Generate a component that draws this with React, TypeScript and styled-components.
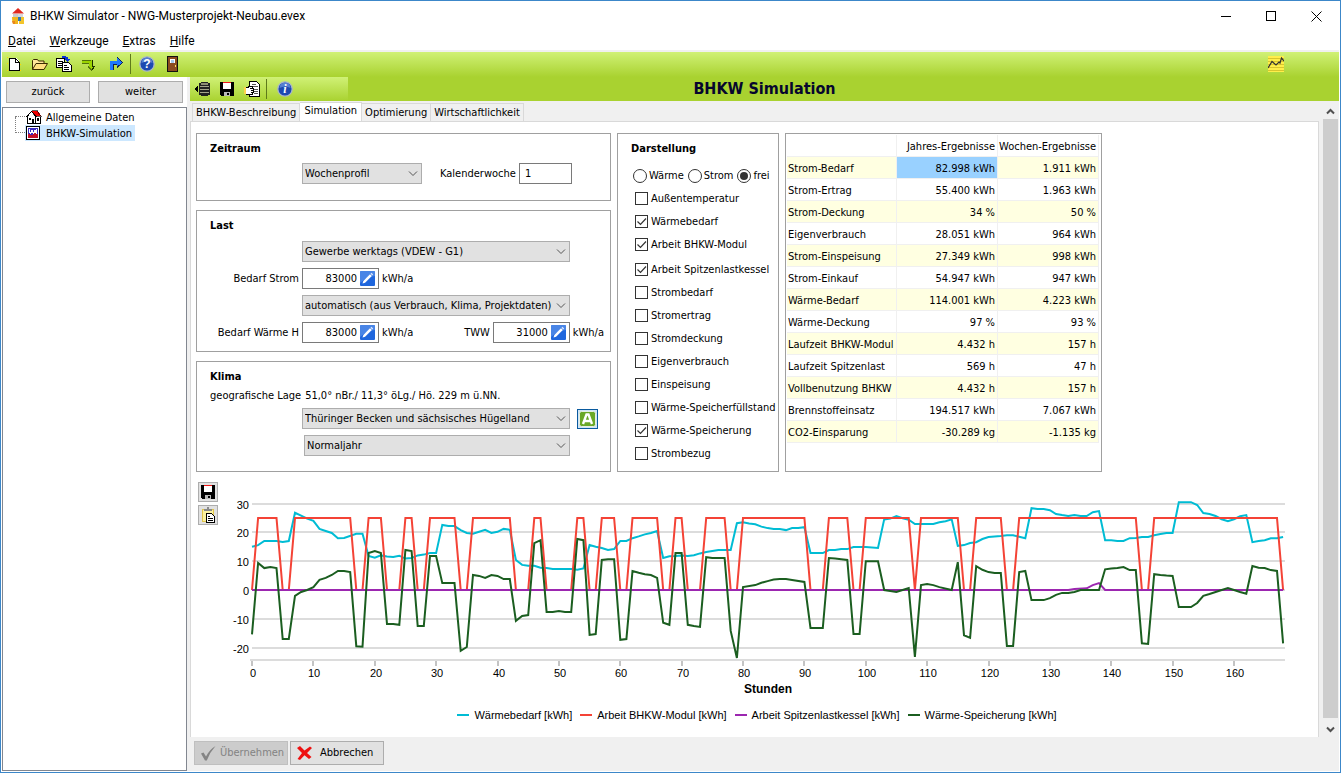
import React, { useState } from "react";
import styled, { createGlobalStyle, css } from "styled-components";

const ui = `"DejaVu Sans Condensed", "DejaVu Sans", "Liberation Sans", sans-serif`;
const shell = `Roboto, "Open Sans", sans-serif`;
const plot = `"Liberation Sans", Arial, sans-serif`;

const Global = createGlobalStyle`
  *, *::before, *::after { box-sizing: border-box; }
  body { margin: 0; background: #fff; color: #000; font: 11px/16px ${ui}; }
  button, input, select { font: inherit; color: inherit; margin: 0; padding: 0; border-radius: 0; }
  svg { display: block; flex: none; }
`;

/* ---------- window shell ---------- */

const Window = styled.div`
  min-height: 100vh;
  display: flex;
  flex-direction: column;
  border: 1px solid #3c87c9;
  padding: 0 1px 1px;
  background: #fff;
`;
const TitleBar = styled.header`
  display: flex;
  align-items: center;
  height: 30px;
  padding-left: 7px;
  font: 12px/16px ${shell};
`;
const TitleText = styled.span`
  margin-left: 5px;
  flex: 1;
`;
const CaptionButton = styled.button`
  width: 45px;
  height: 28px;
  border: 0;
  background: none;
  display: grid;
  place-items: center;
`;
const MenuBar = styled.nav`
  display: flex;
  gap: 14px;
  height: 21px;
  padding: 1px 6px 0;
  border-bottom: 2px solid #f0f0f0;
  font: 12px/18px ${shell};
`;
const MenuItem = styled.button`
  border: 0;
  background: none;
  &::first-letter { text-decoration: underline; }
`;
const ToolBar = styled.div<{ $width?: number }>`
  display: flex;
  align-items: center;
  gap: 1px;
  height: ${(p) => (p.$width ? 24 : 25)}px;
  width: ${(p) => (p.$width ? `${p.$width}px` : "auto")};
  flex: none;
  padding-bottom: ${(p) => (p.$width ? 0 : 2)}px;
  background: linear-gradient(#d0f176, #a9d230);
`;
const ToolButton = styled.button<{ $gap?: number }>`
  width: 24px;
  height: 22px;
  margin-left: ${(p) => p.$gap ?? 0}px;
  border: 0;
  background: none;
  display: grid;
  place-items: center;
`;
const ToolDivider = styled.span`
  width: 1px;
  height: 20px;
  margin: 0 3px 0 1px;
  background: #5f7a1a;
`;
const Spacer = styled.span`
  flex: 1;
`;
const Body = styled.div`
  flex: 1;
  display: flex;
`;

/* ---------- navigation column ---------- */

const Side = styled.aside`
  flex: none;
  width: 188px;
  display: flex;
  flex-direction: column;
  background: #fff;
  border-right: 3px solid #f0f0f0;
  padding: 4px 0 0;
`;
const StepRow = styled.div`
  display: grid;
  grid-template-columns: 84px 85px;
  gap: 8px;
  padding: 0 4px 5px;
`;
const StepButton = styled.button`
  height: 22px;
  margin-bottom: -1px;
  border: 1px solid #adadad;
  background: #e1e1e1;
`;
const Tree = styled.ul`
  flex: 1;
  list-style: none;
  margin: 0;
  padding: 1px 0 0 22px;
  border: 1px solid #828790;
`;
const TreeItem = styled.li<{ $selected?: boolean }>`
  position: relative;
  width: fit-content;
  height: 16px;
  display: flex;
  align-items: center;
  padding: 0 3px 0 1px;
  background: ${(p) => (p.$selected ? "#cde8ff" : "transparent")};
  gap: 4px;
  &::before {
    content: "";
    position: absolute;
    left: -10px;
    width: 10px;
    bottom: 8px;
    height: ${(p) => (p.$selected ? 16 : 1)}px;
    border-bottom: 1px dotted #808080;
    border-left: ${(p) => (p.$selected ? "1px dotted #808080" : "0")};
  }
`;
const TreeText = styled.span`
  padding-top: 2px;
  line-height: 16px;
`;

/* ---------- main column ---------- */

const Main = styled.main`
  flex: 1;
  min-width: 0;
  display: flex;
  flex-direction: column;
  background: #f0f0f0;
`;
const PageHead = styled.div`
  display: flex;
  align-items: center;
  background: #a9d230;
  height: 24px;
`;
const PageTitle = styled.h1`
  flex: 1;
  margin: 0 0 0 -158px;
  color: #06062e;
  font: bold 16px/24px ${ui};
  text-align: center;
`;
const Scroller = styled.div`
  flex: 1;
  display: flex;
  min-height: 0;
`;
const PageColumn = styled.div`
  flex: 1;
  min-width: 0;
  display: flex;
  flex-direction: column;
`;
const Tabs = styled.div`
  display: flex;
  align-items: flex-end;
  height: 20px;
  padding-left: 2px;
`;
const Tab = styled.button<{ $active?: boolean }>`
  height: 18px;
  padding: 1px 3px 0;
  border: 1px solid #d9d9d9;
  border-bottom: 0;
  border-left-width: 0;
  background: #f0f0f0;
  white-space: nowrap;
  line-height: 16px;
  &:first-child { border-left-width: 1px; }
  ${(p) =>
    p.$active &&
    css`
      height: 20px;
      margin-bottom: -1px;
      padding: 0 4px 3px;
      background: #fff;
    `}
`;
const Page = styled.section`
  flex: 1;
  border: 1px solid #d9d9d9;
  border-bottom: 0;
  background: #fff;
  padding: 11px 0 0 5px;
`;
const Track = styled.div`
  width: 20px;
  flex: none;
  margin: 2px 0 0 0;
  padding: 0 1px 0 4px;
  display: flex;
  flex-direction: column;
`;
const TrackButton = styled.button`
  height: 16px;
  border: 0;
  background: #f0f0f0;
  display: grid;
  place-items: center;
`;
const Thumb = styled.div`
  flex: 1;
  background: #cdcdcd;
  margin-bottom: 3px;
`;
const Footer = styled.footer`
  display: flex;
  gap: 2px;
  height: 34px;
  padding: 4px;
`;
const FooterButton = styled.button`
  width: 94px;
  height: 24px;
  display: flex;
  align-items: center;
  gap: 7px;
  padding-left: 5px;
  border: 1px solid #adadad;
  background: #e1e1e1;
  &:disabled { background: #cccccc; border-color: #bfbfbf; color: #838383; gap: 3px; }
`;

/* ---------- groups and form controls ---------- */

const Panels = styled.div`
  display: grid;
  grid-template-columns: 415px 162px 317px;
  gap: 6px;
`;
const Groups = styled.div`
  display: grid;
  grid-template-rows: 68px 142px 111px;
  gap: 9px;
`;
const Group = styled.section`
  border: 1px solid #a0a0a0;
  padding: 7px 0 0 13px;
  background: #fff;
`;
const GroupTitle = styled.h2<{ $gap?: number }>`
  margin: 0 0 ${(p) => p.$gap ?? 7}px;
  font: bold 11px/16px ${ui};
`;
const FormGrid = styled.div`
  display: grid;
  grid-template-columns: 89px 1fr;
  column-gap: 3px;
  row-gap: 6px;
  align-items: center;
`;
const FieldLabel = styled.label`
  grid-column: 1;
  text-align: right;
  white-space: nowrap;
`;
const Field = styled.div`
  grid-column: 2;
  display: flex;
  align-items: center;
  gap: 3px;
`;
const SelectBox = styled.div<{ $width: number; $shift?: boolean }>`
  display: grid;
  width: ${(p) => p.$width}px;
  margin-left: ${(p) => (p.$shift ? 2 : 0)}px;
  align-items: center;
  & > * { grid-area: 1 / 1; }
  & > svg { justify-self: end; margin-right: 4px; pointer-events: none; }
  select {
    appearance: none;
    width: 100%;
    height: 21px;
    padding: 1px 14px 0 2px;
    border: 1px solid #adadad;
    background: #e1e1e1;
  }
`;
const TextInput = styled.input`
  width: 53px;
  height: 21px;
  padding: 0 5px;
  border: 1px solid #7a7a7a;
  background: #fff;
`;
const ValueBox = styled.span`
  display: flex;
  align-items: center;
  width: 77px;
  height: 21px;
  border: 1px solid #7a7a7a;
  padding-right: 3px;
  input {
    flex: 1;
    min-width: 0;
    border: 0;
    outline: 0;
    text-align: right;
    background: none;
    padding-right: 3px;
  }
`;
const PlainButton = styled.button`
  border: 0;
  background: none;
  display: block;
`;
const InlineLabel = styled.label<{ $lead: number }>`
  margin-left: ${(p) => p.$lead}px;
  white-space: nowrap;
`;
const GeoLine = styled.p`
  margin: 0 0 4px;
  display: flex;
  gap: 4px;
  white-space: nowrap;
`;
const AutoButton = styled.button`
  width: 21px;
  height: 20px;
  margin-left: 4px;
  border: 1px solid #0a5a9e;
  background: #cfe4f7;
  display: grid;
  place-items: center;
`;

const RadioRow = styled.div`
  display: flex;
  gap: 4px;
  height: 23px;
  margin: 0 0 0 2px;
`;
const ChecksBlock = styled.div`
  padding: 0 0 2px 4px;
`;
const OptionLabel = styled.label<{ $round?: boolean }>`
  display: grid;
  grid-template-columns: 14px auto;
  justify-content: start;
  align-items: center;
  column-gap: 2px;
  height: 23px;
  white-space: nowrap;
  input {
    grid-area: 1 / 1;
    appearance: none;
    width: ${(p) => (p.$round ? 14 : 13)}px;
    height: ${(p) => (p.$round ? 14 : 13)}px;
    border: 1px solid #333;
    border-radius: ${(p) => (p.$round ? "50%" : "0")};
    background: #fff;
  }
  svg { grid-area: 1 / 1; visibility: hidden; pointer-events: none; }
  input:checked + svg { visibility: visible; }
  span { grid-area: 1 / 2; }
`;

const ResultBox = styled.section`
  border: 1px solid #a0a0a0;
  padding: 1px;
`;
const ResultTable = styled.table`
  border-collapse: separate;
  border-spacing: 0;
  table-layout: fixed;
  width: 312px;
  th, td {
    height: 22px;
    padding: 2px 2px 0 1px;
    border-right: 1px solid #f0f0f0;
    border-bottom: 1px solid #f0f0f0;
    font-weight: normal;
    white-space: nowrap;
    text-align: right;
  }
  tr > :first-child { text-align: left; padding-right: 0; }
  tbody tr:nth-child(odd) > * { background: #ffffe1; }
  tbody tr > td[aria-selected="true"] { background: #99d1ff; }
`;

/* ---------- chart ---------- */

const ChartArea = styled.div`
  display: flex;
  gap: 4px;
  padding: 10px 0 0 2px;
`;
const ChartTools = styled.div`
  display: flex;
  flex-direction: column;
  gap: 3px;
`;
const ChartButton = styled.button`
  width: 20px;
  height: 20px;
  border: 1px solid #adadad;
  background: #e1e1e1;
  display: grid;
  place-items: center;
`;
const ChartSvg = styled.svg`
  flex: 1 1 0;
  min-width: 0;
  height: auto;
  font: 11px ${plot};
`;
const Legend = styled.ul`
  display: flex;
  justify-content: center;
  gap: 8px;
  margin: 8px 0 13px;
  padding: 0;
  list-style: none;
  font: 11px/16px ${plot};
`;
const LegendItem = styled.li<{ $color: string }>`
  display: flex;
  align-items: center;
  gap: 5px;
  &::before {
    content: "";
    width: 12px;
    height: 2px;
    background: ${(p) => p.$color};
  }
`;

/* ---------- icons ---------- */

const Icon = ({ children, w = 16, h = 16, crisp = true }: { children: React.ReactNode; w?: number; h?: number; crisp?: boolean }) => (
  <svg width={w} height={h} viewBox={`0 0 ${w} ${h}`} fill="none" shapeRendering={crisp ? "crispEdges" : "auto"} aria-hidden="true">
    {children}
  </svg>
);

const AppIcon = () => (
  <Icon crisp={false}>
    <path d="M3 5.500 9 0l6 5.500z" fill="#e0291f" />
    <path d="M4 6h5v4H4z" fill="#c9c9c9" />
    <path d="M3 9h6v7H4q-1-3-1-7z" fill="#f2b51c" />
    <path d="M9 6h5v4H9z" fill="#d5d8dc" />
    <path d="M10 9h5v7h-5z" fill="#f3c52c" />
    <path d="M9 9h3v4H9z" fill="#2f78b7" />
    <path d="M3 13h3v3H4z" fill="#e9861d" />
  </Icon>
);
const NewIcon = () => (
  <Icon>
    <path d="M3 2h7l3 3v10H3z" fill="#fff" />
    <path d="M3.500 14.500V2.500h6l3.500 3.500v8.500zM9.500 2.500v3.500h3" stroke="#000" />
    <path d="M1 1h1v1H1zM1 7h1v1H1zM1 14h1v1H1zM14 14h1v1h-1zM14 8h1v1h-1z" fill="#ffd800" />
  </Icon>
);
const OpenIcon = () => (
  <Icon w={17} crisp={false}>
    <path d="M1.500 13.500v-9l1-1h4l1 1.500h5.500v3" fill="#ffe79b" stroke="#3a2b00" />
    <path d="M1.500 13.500 5 7.500h11.500l-3.500 6z" fill="#ffdf80" stroke="#3a2b00" />
  </Icon>
);
const CopyIcon = () => (
  <Icon>
    <path d="M.5 2.500h8v9h-8z" fill="#fff" stroke="#000" />
    <path d="M2 5.500h5M2 7.500h5M2 9.500h5" stroke="#000" />
    <path d="M6.500 6.500h6l2.500 2.500v6.500h-8.500z" fill="#fff" stroke="#000" />
    <path d="M8 9.500h3M8 11.500h5M8 13.500h5" stroke="#000" />
    <path d="M6 0h4v1h2v2h2l-3 3-3-3h1V2H6z" fill="#0a2fd6" />
  </Icon>
);
const GreenArrowIcon = () => (
  <Icon>
    <path d="M1 4h10v6h3l-3.500 4L7 10h1V7H1z" fill="#9bd400" />
    <path d="M1 4.500h9M1 7.500h7" stroke="#53750a" />
    <path d="M11.500 4v6.500h2L11 14" stroke="#1c3000" />
    <path d="m7 10.500 4 4" stroke="#53750a" />
  </Icon>
);
const BlueArrowIcon = () => (
  <Icon>
    <path d="M2 14V5h7V1l6 5.500L9 11V8H6v6z" fill="#1e78ff" />
    <path d="M9.500 1.500 14.500 6.500 9 11.500" stroke="#12214f" />
    <path d="M5.500 14V8.500H9" stroke="#12214f" />
  </Icon>
);
const RoundIcon = ({ glyph, italic }: { glyph: string; italic?: boolean }) => (
  <Icon crisp={false}>
    <circle cx="8" cy="8" r="7.200" fill="#1d49b0" stroke="#aab6cc" strokeWidth="1.300" />
    <path d="M2.500 7a5.500 5.500 0 0 1 11 0q-5.500-3-11 0z" fill="#6f95e0" opacity=".7" />
    <text x="8" y="12" textAnchor="middle" fill="#fff" fontSize="12" fontWeight="bold" fontStyle={italic ? "italic" : "normal"} fontFamily={italic ? "Liberation Serif, serif" : "Liberation Sans, sans-serif"}>
      {glyph}
    </text>
  </Icon>
);
const DoorIcon = () => (
  <Icon>
    <path d="M3 0h11v16H3z" fill="#111" />
    <path d="M4 1h9v14H4z" fill="#8b4b20" />
    <path d="M6 3h5v4H6z" fill="#fff" />
    <path d="M7 4h3v3H7z" fill="#a5c8ea" />
    <path d="M11 9h1v2h-1z" fill="#ffe25a" />
  </Icon>
);
const GraphIcon = () => (
  <Icon>
    <path d="M0 0h16v16H0z" fill="#ffee4a" />
    <path d="M0 2.500h16M0 5.500h16M0 8.500h16M0 11.500h16M0 14.500h16" stroke="#d9c62e" />
    <path d="m0 12 4-6.500 4 3.500 3-3 1 1 1.500-5L16 5" stroke="#333" strokeWidth="1.200" shapeRendering="auto" />
  </Icon>
);
const DatabaseIcon = () => (
  <Icon w={17}>
    <path d="M0 8 4 4v8z" fill="#000" />
    <path d="M7 1h7v1h2v12h-2v1H7v-1H5V2h2z" fill="#222" />
    <path d="M7 2h7v2H7z" fill="#8d8d74" />
    <path d="M6 5.500h9M6 8.500h9M6 11.500h9" stroke="#a5a58a" />
  </Icon>
);
const DiskIcon = () => (
  <Icon>
    <path d="M1 1h14v14H2l-1-1z" fill="#000" />
    <path d="M4 1h8v7H4z" fill="#fff" />
    <path d="M4 1h8v1H4z" fill="#f01818" />
    <path d="M5 11h6v4H5z" fill="#b8b8b8" />
    <path d="M8 12h2v2H8z" fill="#000" />
  </Icon>
);
const ReportIcon = () => (
  <Icon>
    <path d="M5.500.5h7l3 3v12h-10z" fill="#fff" stroke="#000" />
    <path d="M8 3.500h4M8 5.500h6M10 8.500h4M10 10.500h4M10 12.500h4" stroke="#555" />
    <path d="M1.500 6.500h3l2-1.500h2v2h1v2h-1v2h-1v2H3l-1.500-1z" fill="#fff" />
    <path d="M1 6.500h3L6 5h2.500v2M5.500 7.500h4v2h-3M9 9.500v2H6.500M8.500 11.500v2H3l-2-1" stroke="#000" />
    <path d="M0 6h2v7H0z" fill="#ffd34a" />
  </Icon>
);
const HouseIcon = () => (
  <Icon>
    <path d="M1.500 7.500v7h13v-7L12 4H5z" fill="#fff" />
    <path d="M5.500 1.500h6l4 5.500h-5.500z" fill="#f00000" stroke="#000" strokeWidth=".6" />
    <path d="M.5 8 5.500 2.500 10.500 8M1.500 7.500v7h13v-7M9.500 7.500v7" stroke="#000" />
    <path d="M3 9h2v2H3zM6 10h2v4H6zM11 9h2v3h-2z" fill="#000" />
  </Icon>
);
const SimIcon = () => (
  <Icon>
    <path d="M.5 1.500h13v13H.5z" fill="#fff" stroke="#000" />
    <path d="M2 3h10v10H2z" fill="#3a2cc0" />
    <path d="M2 9l4 1 3-2 3 1v4H2z" fill="#c4122a" />
    <path d="M3.500 4v3l1 1 1-1V5h1v2l1 1 1-1V5h1v2l1 1V4" stroke="#fff" />
  </Icon>
);
const PencilIcon = () => (
  <Icon w={15} h={15} crisp={false}>
    <rect width="15" height="15" rx="1" fill="#1f66dd" />
    <path d="M0 0h15v5Q6 6 0 12z" fill="#5b93ea" opacity=".7" />
    <path d="m2.500 12.500.8-2.600L10 3.200l1.800 1.800L5.100 11.700z" fill="#fff" />
    <path d="m10.500 2.700 1-.9 1.700 1.700-.9 1z" fill="#dfe9fb" />
  </Icon>
);
const AutoIcon = () => (
  <Icon w={17} crisp={false}>
    <rect x=".5" y=".5" width="16" height="15" rx="2" fill="#6aa827" stroke="#e4efe0" />
    <path d="M4 13 7.500 3.500h2L13 13M5.500 10h6" stroke="#fff" strokeWidth="2.400" />
  </Icon>
);
const PasteIcon = () => (
  <Icon>
    <path d="M2.500 2.500h11v12h-11z" fill="#fbf2a0" stroke="#e0c44a" />
    <path d="M4 2h8v2H4zM7 0h2v2H7z" fill="#8a8a8a" />
    <path d="M6.500 6.500h5l3 3v6h-8z" fill="#fff" stroke="#000" />
    <path d="M8 9.500h2M8 11.500h5M8 13.500h5" stroke="#000" />
  </Icon>
);
const Chevron = () => (
  <Icon w={10} h={6} crisp={false}>
    <path d="m1 .5 4 4 4-4" stroke="#555" />
  </Icon>
);
const TrackArrow = ({ down }: { down?: boolean }) => (
  <Icon w={9} h={7} crisp={false}>
    <path d={down ? "M1 1.500 4.500 5 8 1.500" : "M1 5.500 4.500 2 8 5.500"} stroke="#505050" strokeWidth="2" />
  </Icon>
);
const Tick = () => (
  <Icon w={13} h={13} crisp={false}>
    <path d="m2.500 6.500 3 3L11 3.500" stroke="#333" strokeWidth="1.200" />
  </Icon>
);
const Dot = () => (
  <Icon w={14} h={14} crisp={false}>
    <circle cx="7" cy="7" r="4" fill="#333" />
  </Icon>
);
const OkIcon = () => (
  <Icon w={17} crisp={false}>
    <path d="M1 8.500 3.500 7.500 6 11.500Q9.500 4.500 15.500 1 10 7 6.800 15.500H5z" fill="#848484" />
  </Icon>
);
const CancelIcon = () => (
  <Icon w={17} crisp={false}>
    <path d="M1 3 4 1l4.500 4.500L14 1.500l2 1.500-5 5 4.500 4-2.500 2-4.500-3.800L4 15l-2.500-1 4.500-6z" fill="#ee1111" />
  </Icon>
);

/* ---------- data ---------- */

const results: [string, string, string][] = [
  ["Strom-Bedarf", "82.998 kWh", "1.911 kWh"],
  ["Strom-Ertrag", "55.400 kWh", "1.963 kWh"],
  ["Strom-Deckung", "34 %", "50 %"],
  ["Eigenverbrauch", "28.051 kWh", "964 kWh"],
  ["Strom-Einspeisung", "27.349 kWh", "998 kWh"],
  ["Strom-Einkauf", "54.947 kWh", "947 kWh"],
  ["Wärme-Bedarf", "114.001 kWh", "4.223 kWh"],
  ["Wärme-Deckung", "97 %", "93 %"],
  ["Laufzeit BHKW-Modul", "4.432 h", "157 h"],
  ["Laufzeit Spitzenlast", "569 h", "47 h"],
  ["Vollbenutzung BHKW", "4.432 h", "157 h"],
  ["Brennstoffeinsatz", "194.517 kWh", "7.067 kWh"],
  ["CO2-Einsparung", "-30.289 kg", "-1.135 kg"],
];

const optionBlocks: [string, boolean][][] = [
  [
    ["Außentemperatur", false],
    ["Wärmebedarf", true],
    ["Arbeit BHKW-Modul", true],
  ],
  [
    ["Arbeit Spitzenlastkessel", true],
    ["Strombedarf", false],
    ["Stromertrag", false],
    ["Stromdeckung", false],
    ["Eigenverbrauch", false],
    ["Einspeisung", false],
    ["Wärme-Speicherfüllstand", false],
    ["Wärme-Speicherung", true],
    ["Strombezug", false],
  ],
];

/* Series are stored as "hour:value" break points; hours between them are interpolated. */
const parse = (s: string): [number, number][] => s.split(" ").map((p) => p.split(":").map(Number) as [number, number]);

const demand = parse(
  "0:15 1:15.6 2:17 4:17 5:16.7 6:17 7:26.8 8:25.8 9:24.8 10:24 11:21.2 12:20.5 13:19.8 14:18 15:18.1 17:19.5 18:19.5 19:11.8 20:11.2 21:12 22:11.6 23:11.5 24:11.9 25:10.9 26:11.1 27:12 28:12.3 29:12.8 30:12.8 31:22.6 32:22.2 33:22.2 34:20.8 35:19.8 36:19.5 37:20.2 38:20.9 39:19.8 40:20.2 41:21.2 42:20.9 43:10.4 44:8.7 45:8.4 46:8.4 47:7.7 48:7.6 49:7.3 52:7.3 53:7 54:7.5 55:15.6 56:15 57:14.6 58:13.9 59:14.2 60:17 61:17 62:18 63:18.6 64:19.3 65:19.8 66:20.5 67:11.1 68:11.7 69:11.8 70:12 71:11.8 72:12.1 73:12.7 74:13.2 76:13.9 78:13.9 79:23.2 80:23.5 81:23.1 82:22.8 83:22 84:21.5 85:21.2 86:21.2 87:20.8 88:21.5 89:21.5 90:21.8 91:12.8 93:12.8 94:13.9 95:13.9 96:14.2 97:14.2 98:14.9 100:14.9 102:14.6 103:24.5 104:24.8 105:25.7 106:24.9 107:24.4 108:22.9 111:22.9 112:23.5 113:23.9 114:24.5 115:15.3 116:15.6 117:16.3 118:16.6 119:17.7 120:18.4 121:18.6 122:18.7 123:19 124:19 125:18.5 126:18 127:28.4 128:28.1 129:28.1 130:27.7 131:26.4 132:26 133:25.7 134:26 135:25.7 136:25.7 137:27 138:27.4 139:17.3 140:17.3 141:17 142:17 143:18 144:18.1 145:18.4 146:18.4 147:19 148:19.4 149:19.8 150:19.8 151:30.5 153:30.5 154:29.5 155:26.7 156:26.4 157:25.7 158:24.6 159:23.9 160:24.6 161:25.6 162:26 163:16.6 164:17 165:17.3 166:18 167:18 168:18.4"
);
const storage = parse(
  "0:-15.4 1:9.4 2:7.6 3:8 4:7.6 5:-17 6:-17 7:-2 8:-0.7 9:0 10:1 11:3.5 12:4.2 13:5.2 14:6.6 15:6.6 16:6.2 17:-19.5 18:-19.7 19:12.8 20:13.5 21:12.8 22:-11.8 23:-11.8 24:-12.1 25:13.9 26:13.5 27:-12.5 28:-12.5 29:11.8 30:11.8 31:2.4 33:2.4 34:-21.1 35:-19.8 36:5.2 37:4.9 38:4.2 39:5.2 40:4.9 41:3.8 42:3.8 43:-10.7 44:-9 45:-8.7 46:16.3 47:17.3 48:-7.6 49:-7.6 50:-7.3 51:-7.6 52:-7.6 53:17.7 54:17.3 55:-15.6 56:-15.3 57:10.4 58:10.7 59:10.7 60:-17.3 61:-17 62:6.6 63:6 64:5.5 65:5.2 66:4.2 67:-11.4 68:-12.1 69:12.8 70:12.8 71:-12.1 72:-12.5 73:-12.8 74:11.4 75:11.1 77:11.1 78:-14.2 79:-23.6 80:1 82:1.7 83:2.5 84:3.1 85:3.6 86:3.8 87:3.8 88:3.5 90:2.8 91:-13.2 93:-13.2 94:11.1 95:10.9 96:10.7 97:10.4 98:-15.3 99:-15.3 100:10 102:10 103:0 104:-0.3 105:-0.7 106:0 107:0.7 108:-23.2 109:1.7 110:2.1 111:1.7 112:1 114:0 115:9.7 116:-15.7 117:-16.6 118:8.3 119:7 120:6.2 121:5.9 122:5.9 123:-19.4 124:-19.4 125:6.2 126:6.6 127:-3.5 129:-3.5 130:-2.8 131:-1.7 132:-1 133:-1 134:-0.7 135:0 138:0 139:7.2 140:7.5 141:7.6 142:8 143:6.9 144:6.9 145:-18.5 146:-18.7 147:5.5 148:5.2 149:5 150:4.9 151:-5.9 153:-5.9 154:-4.5 155:-2 156:-1.4 157:-0.7 158:0 159:0.7 160:0 161:-0.7 162:-1.3 163:8.3 164:7.7 165:7.6 166:6.9 167:6.6 168:-18.5"
);
const boiler = parse("0:0 133:0 134:0.3 136:0.6 137:1.7 138:2.4 139:0 168:0");
const runs = [[1, 4], [7, 16], [19, 21], [25, 26], [29, 33], [36, 42], [46, 47], [53, 54], [57, 59], [62, 66], [69, 70], [74, 77], [80, 90], [94, 97], [100, 107], [109, 115], [118, 122], [125, 144], [147, 167]];
const engine: [number, number][] = runs.flatMap(([a, b]) => [[a - 1, 0], [a, 25], [b, 25], [b + 1, 0]] as [number, number][]);

const series = [
  { name: "Wärmebedarf [kWh]", color: "#00bcd4", data: demand },
  { name: "Arbeit BHKW-Modul [kWh]", color: "#f44336", data: engine },
  { name: "Arbeit Spitzenlastkessel [kWh]", color: "#9c27b0", data: boiler },
  { name: "Wärme-Speicherung [kWh]", color: "#1b5e20", data: storage },
];

const px = (hour: number) => 30 + hour * 6.1375;
const py = (value: number) => 108 - value * 2.88;

const Chart = () => (
  <ChartSvg viewBox="0 0 1096 217" role="img" aria-label="Wochenverlauf in Stunden">
    {[30, 20, 10, 0, -10, -20].map((v) => (
      <g key={v}>
        <path d={`M30 ${Math.round(py(v))}H1063`} stroke="#dcdcdc" strokeWidth="2" />
        <text x="27" y={Math.round(py(v)) + 5} textAnchor="end">{v}</text>
      </g>
    ))}
    <path d="M28 178H1063" stroke="#dcdcdc" strokeWidth="2" />
    {Array.from({ length: 17 }, (_, i) => (
      <g key={i}>
        <path d={`M${Math.round(px(i * 10))} 179v5`} stroke="#c4c4c4" strokeWidth="2" />
        <text x={Math.round(px(i * 10)) + 1} y="195" textAnchor="middle">{i * 10}</text>
      </g>
    ))}
    {series.map((s) => (
      <polyline key={s.name} points={s.data.map(([h, v]) => `${px(h).toFixed(1)},${py(v).toFixed(1)}`).join(" ")} fill="none" stroke={s.color} strokeWidth="2" />
    ))}
    <text x="546" y="211" textAnchor="middle" fontSize="12" fontWeight="bold">Stunden</text>
  </ChartSvg>
);

/* ---------- composed controls ---------- */

const Select = ({ id, label, value, width, shift }: { id: string; label: string; value: string; width: number; shift?: boolean }) => (
  <SelectBox $width={width} $shift={shift}>
    <select id={id} aria-label={label} defaultValue={value}>
      <option>{value}</option>
    </select>
    <Chevron />
  </SelectBox>
);

const Value = ({ id, value }: { id: string; value: string }) => (
  <>
    <ValueBox>
      <input id={id} defaultValue={value} />
      <PlainButton aria-label="Wert bearbeiten"><PencilIcon /></PlainButton>
    </ValueBox>
    <span>kWh/a</span>
  </>
);

const tabNames = ["BHKW-Beschreibung", "Simulation", "Optimierung", "Wirtschaftlichkeit"];

export default function App() {
  const [tab, setTab] = useState("Simulation");
  return (
    <>
      <Global />
      <Window>
        <TitleBar>
          <AppIcon />
          <TitleText>BHKW Simulator - NWG-Musterprojekt-Neubau.evex</TitleText>
          <CaptionButton aria-label="Minimieren"><Icon w={11} h={11}><path d="M0 5.500h10" stroke="#000" /></Icon></CaptionButton>
          <CaptionButton aria-label="Maximieren"><Icon w={11} h={11}><path d="M.5.5h9v9h-9z" stroke="#000" /></Icon></CaptionButton>
          <CaptionButton aria-label="Schließen"><Icon w={11} h={11} crisp={false}><path d="m.5.5 10 10M10.500.5l-10 10" stroke="#000" /></Icon></CaptionButton>
        </TitleBar>
        <MenuBar>
          {["Datei", "Werkzeuge", "Extras", "Hilfe"].map((m) => <MenuItem key={m}>{m}</MenuItem>)}
        </MenuBar>
        <ToolBar>
          <ToolButton aria-label="Neu"><NewIcon /></ToolButton>
          <ToolButton aria-label="Öffnen"><OpenIcon /></ToolButton>
          <ToolButton aria-label="Kopieren"><CopyIcon /></ToolButton>
          <ToolButton aria-label="Importieren"><GreenArrowIcon /></ToolButton>
          <ToolButton $gap={2} aria-label="Exportieren"><BlueArrowIcon /></ToolButton>
          <ToolDivider />
          <ToolButton aria-label="Hilfe"><RoundIcon glyph="?" /></ToolButton>
          <ToolButton aria-label="Beenden"><DoorIcon /></ToolButton>
          <Spacer />
          <ToolButton aria-label="Auswertung"><GraphIcon /></ToolButton>
          <ToolButton as="span" $gap={26} />
        </ToolBar>
        <Body>
          <Side>
            <StepRow>
              <StepButton>zurück</StepButton>
              <StepButton>weiter</StepButton>
            </StepRow>
            <Tree>
              <TreeItem><HouseIcon /><TreeText>Allgemeine Daten</TreeText></TreeItem>
              <TreeItem $selected><SimIcon /><TreeText>BHKW-Simulation</TreeText></TreeItem>
            </Tree>
          </Side>
          <Main>
            <PageHead>
              <ToolBar $width={158}>
                <ToolButton aria-label="Datenbank"><DatabaseIcon /></ToolButton>
                <ToolButton aria-label="Speichern"><DiskIcon /></ToolButton>
                <ToolButton aria-label="Bericht"><ReportIcon /></ToolButton>
                <ToolDivider />
                <ToolButton $gap={2} aria-label="Information"><RoundIcon glyph="i" italic /></ToolButton>
              </ToolBar>
              <PageTitle>BHKW Simulation</PageTitle>
            </PageHead>
            <Scroller>
              <PageColumn>
                <Tabs role="tablist">
                  {tabNames.map((t) => (
                    <Tab key={t} role="tab" aria-selected={t === tab} $active={t === tab} onClick={() => setTab(t)}>{t}</Tab>
                  ))}
                </Tabs>
                <Page>
                  <Panels>
                    <Groups>
                      <Group>
                        <GroupTitle $gap={6}>Zeitraum</GroupTitle>
                        <FormGrid>
                          <Field>
                            <Select id="period" label="Profil" value="Wochenprofil" width={120} />
                            <InlineLabel $lead={15} htmlFor="week">Kalenderwoche</InlineLabel>
                            <TextInput id="week" defaultValue="1" />
                          </Field>
                        </FormGrid>
                      </Group>
                      <Group>
                        <GroupTitle>Last</GroupTitle>
                        <FormGrid>
                          <Field><Select id="load" label="Lastprofil" value="Gewerbe werktags (VDEW - G1)" width={268} /></Field>
                          <FieldLabel htmlFor="power">Bedarf Strom</FieldLabel>
                          <Field><Value id="power" value="83000" /></Field>
                          <Field><Select id="mode" label="Ermittlung" value="automatisch (aus Verbrauch, Klima, Projektdaten)" width={268} /></Field>
                          <FieldLabel htmlFor="heat">Bedarf Wärme H</FieldLabel>
                          <Field>
                            <Value id="heat" value="83000" />
                            <InlineLabel $lead={48} htmlFor="water">TWW</InlineLabel>
                            <Value id="water" value="31000" />
                          </Field>
                        </FormGrid>
                      </Group>
                      <Group>
                        <GroupTitle $gap={3}>Klima</GroupTitle>
                        <GeoLine><span>geografische Lage</span><span>51,0° nBr./ 11,3° öLg./ Hö. 229 m ü.NN.</span></GeoLine>
                        <FormGrid>
                          <Field>
                            <Select id="region" label="Klimaregion" value="Thüringer Becken und sächsisches Hügelland" width={268} />
                            <AutoButton aria-label="Automatisch wählen"><AutoIcon /></AutoButton>
                          </Field>
                          <Field><Select id="year" label="Jahr" value="Normaljahr" width={266} shift /></Field>
                        </FormGrid>
                      </Group>
                    </Groups>
                    <Group>
                      <GroupTitle>Darstellung</GroupTitle>
                      <RadioRow role="radiogroup" aria-label="Darstellung">
                        {["Wärme", "Strom", "frei"].map((r) => (
                          <OptionLabel key={r} $round>
                            <input type="radio" name="view" defaultChecked={r === "frei"} />
                            <Dot />
                            <span>{r}</span>
                          </OptionLabel>
                        ))}
                      </RadioRow>
                      {optionBlocks.map((block, i) => (
                        <ChecksBlock key={i}>
                          {block.map(([name, on]) => (
                            <OptionLabel key={name}>
                              <input type="checkbox" defaultChecked={on} />
                              <Tick />
                              <span>{name}</span>
                            </OptionLabel>
                          ))}
                        </ChecksBlock>
                      ))}
                    </Group>
                    <ResultBox>
                      <ResultTable>
                        <colgroup><col style={{ width: 110 }} /><col /><col /></colgroup>
                        <thead>
                          <tr><th /><th scope="col">Jahres-Ergebnisse</th><th scope="col">Wochen-Ergebnisse</th></tr>
                        </thead>
                        <tbody>
                          {results.map(([name, year, week], i) => (
                            <tr key={name}>
                              <th scope="row">{name}</th>
                              <td aria-selected={i === 0}>{year}</td>
                              <td>{week}</td>
                            </tr>
                          ))}
                        </tbody>
                      </ResultTable>
                    </ResultBox>
                  </Panels>
                  <ChartArea>
                    <ChartTools>
                      <ChartButton aria-label="Diagramm speichern"><DiskIcon /></ChartButton>
                      <ChartButton aria-label="Diagramm kopieren"><PasteIcon /></ChartButton>
                    </ChartTools>
                    <Chart />
                  </ChartArea>
                  <Legend>
                    {series.map((s) => <LegendItem key={s.name} $color={s.color}>{s.name}</LegendItem>)}
                  </Legend>
                </Page>
              </PageColumn>
              <Track>
                <TrackButton aria-label="Nach oben"><TrackArrow /></TrackButton>
                <Thumb />
                <TrackButton aria-label="Nach unten"><TrackArrow down /></TrackButton>
              </Track>
            </Scroller>
            <Footer>
              <FooterButton disabled><OkIcon />Übernehmen</FooterButton>
              <FooterButton><CancelIcon />Abbrechen</FooterButton>
            </Footer>
          </Main>
        </Body>
      </Window>
    </>
  );
}
